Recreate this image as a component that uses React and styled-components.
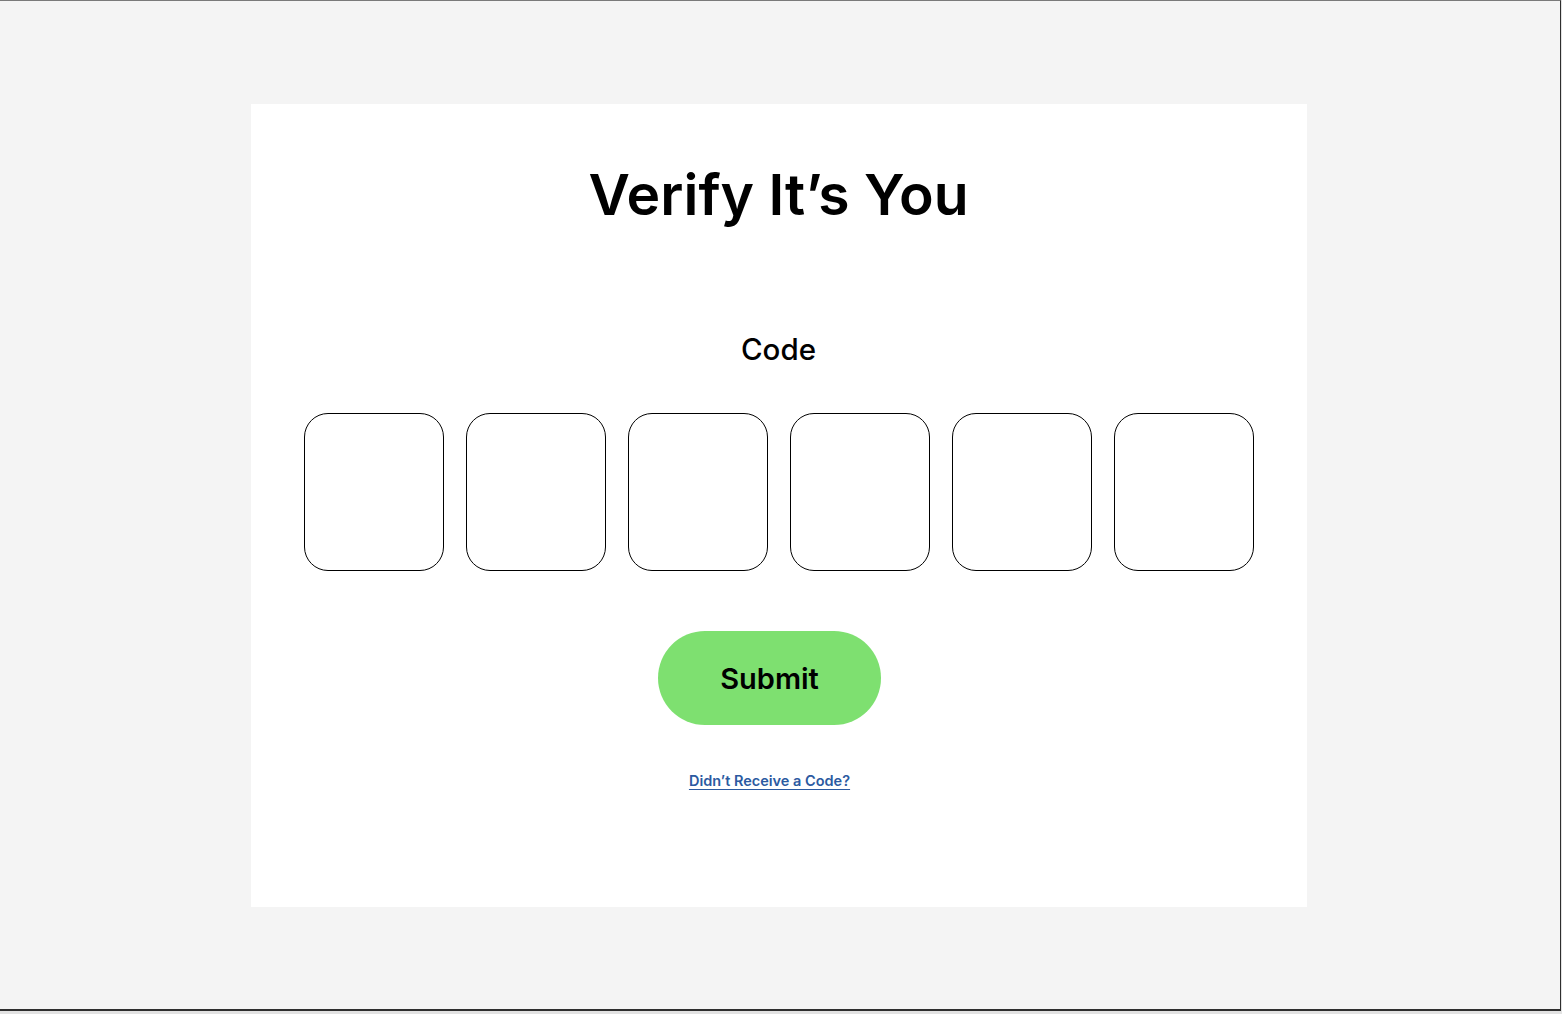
import React, { useState } from 'react';
import styled, { createGlobalStyle } from 'styled-components';

const GlobalStyle = createGlobalStyle`
  html, body {
    margin: 0;
    padding: 0;
    background: #e2e2e2;
  }
  body {
    font-family: Inter, "Noto Sans", "Liberation Sans", sans-serif;
  }
`;

const Screen = styled.div`
  width: 1561px;
  height: 1011px;
  box-sizing: border-box;
  background: #f4f4f4;
  border-top: 1px solid #7a7a7a;
  border-right: 1px solid #2e2e2e;
  border-bottom: 2px solid #2e2e2e;
  display: flex;
  justify-content: center;
  align-items: flex-start;
  padding: 103px 3px 0 0;
`;

const Card = styled.div`
  width: 1056px;
  height: 803px;
  box-sizing: border-box;
  background: #ffffff;
  padding: 56px 53px 0;
  display: flex;
  flex-direction: column;
  align-items: center;
`;

const Title = styled.h1`
  margin: 0;
  font-size: 57px;
  font-weight: 600;
  line-height: 70px;
  color: #000;
`;

const Label = styled.label`
  margin-top: 102px;
  font-size: 29.5px;
  font-weight: 500;
  line-height: 34px;
  color: #000;
`;

const CodeRow = styled.div`
  margin-top: 47px;
  display: flex;
  gap: 22px;
`;

const CodeBox = styled.input`
  width: 140px;
  height: 158px;
  box-sizing: border-box;
  border: 1px solid #000;
  border-radius: 24px;
  background: #fff;
  text-align: center;
  font-family: inherit;
  font-size: 48px;
  outline: none;
`;

const Actions = styled.div`
  margin-top: 60px;
  padding-right: 18px;
  display: flex;
  flex-direction: column;
  align-items: center;
`;

const SubmitButton = styled.button`
  width: 223px;
  height: 94px;
  border: none;
  border-radius: 47px;
  background: #7ee070;
  color: #000;
  font-family: inherit;
  font-size: 29px;
  font-weight: 600;
  cursor: pointer;
`;

const ResendLink = styled.a`
  margin-top: 47px;
  font-size: 14.5px;
  font-weight: 600;
  line-height: 18px;
  color: #2b5aa1;
  text-decoration: underline;
  text-underline-offset: 3px;
  cursor: pointer;
`;

export default function App() {
  const [code, setCode] = useState(['', '', '', '', '', '']);

  const update = (i, v) => {
    const next = [...code];
    next[i] = v.slice(-1);
    setCode(next);
  };

  return (
    <>
      <GlobalStyle />
      <Screen>
        <Card>
          <Title>Verify It’s You</Title>
          <Label>Code</Label>
          <CodeRow>
            {code.map((c, i) => (
              <CodeBox key={i} value={c} maxLength={1} onChange={(e) => update(i, e.target.value)} />
            ))}
          </CodeRow>
          <Actions>
            <SubmitButton type="button">Submit</SubmitButton>
            <ResendLink>Didn’t Receive a Code?</ResendLink>
          </Actions>
        </Card>
      </Screen>
    </>
  );
}
